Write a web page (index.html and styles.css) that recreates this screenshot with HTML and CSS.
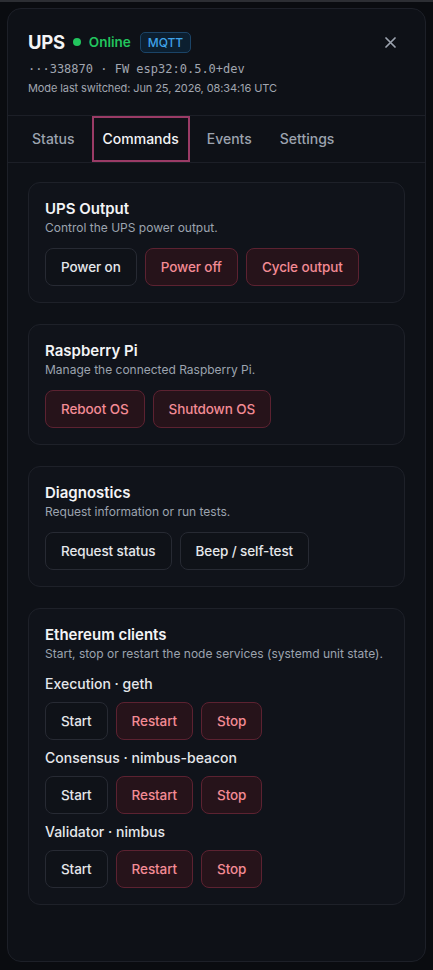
FILE: index.html
```html
<!DOCTYPE html>
<html lang="en">
<head>
  <meta charset="UTF-8" />
  <meta name="viewport" content="width=device-width, initial-scale=1.0"/>
  <title>UPS | Commands</title>
  <link rel="stylesheet" href="styles.css">
</head>
<body>
  <div class="panel">
    <div class="header">
      <div class="title-row">
        <span class="device-name">UPS</span>
        <span class="dot"></span>
        <span class="online">Online</span>
        <span class="badge">MQTT</span>
        <button class="close" aria-label="Close">
          <svg width="11" height="11" viewBox="0 0 11 11"><path d="M1 1L10 10M10 1L1 10" stroke="#9ca3af" stroke-width="1.7" stroke-linecap="round"/></svg>
        </button>
      </div>
      <div class="mono">···338870 · FW esp32:0.5.0+dev</div>
      <div class="meta">Mode last switched: Jun 25, 2026, 08:34:16 UTC</div>
    </div>

    <div class="tabs">
      <div class="tab">Status</div>
      <div class="tab active">Commands</div>
      <div class="tab">Events</div>
      <div class="tab">Settings</div>
    </div>

    <div class="content">
      <div class="card">
        <h3>UPS Output</h3>
        <p>Control the UPS power output.</p>
        <div class="actions">
          <button class="btn">Power on</button>
          <button class="btn danger">Power off</button>
          <button class="btn danger">Cycle output</button>
        </div>
      </div>

      <div class="card">
        <h3>Raspberry Pi</h3>
        <p>Manage the connected Raspberry Pi.</p>
        <div class="actions">
          <button class="btn danger">Reboot OS</button>
          <button class="btn danger">Shutdown OS</button>
        </div>
      </div>

      <div class="card">
        <h3>Diagnostics</h3>
        <p>Request information or run tests.</p>
        <div class="actions">
          <button class="btn">Request status</button>
          <button class="btn">Beep / self-test</button>
        </div>
      </div>

      <div class="card">
        <h3>Ethereum clients</h3>
        <p>Start, stop or restart the node services (systemd unit state).</p>

        <div class="service">
          <div class="service-name">Execution · geth</div>
          <div class="actions">
            <button class="btn">Start</button>
            <button class="btn danger">Restart</button>
            <button class="btn danger">Stop</button>
          </div>
        </div>
        <div class="service">
          <div class="service-name">Consensus · nimbus-beacon</div>
          <div class="actions">
            <button class="btn">Start</button>
            <button class="btn danger">Restart</button>
            <button class="btn danger">Stop</button>
          </div>
        </div>
        <div class="service">
          <div class="service-name">Validator · nimbus</div>
          <div class="actions">
            <button class="btn">Start</button>
            <button class="btn danger">Restart</button>
            <button class="btn danger">Stop</button>
          </div>
        </div>
      </div>
    </div>
  </div>
</body>
</html>
```

FILE: styles.css
```css
* {
  box-sizing: border-box;
  font-family: 'Inter', 'Noto Sans', sans-serif;
}

body {
  margin: 0;
  padding: 6px 7px 8px;
  background: #0a0c10;
  border-top: 2px solid #2c2e33;
  height: 970px;
}

.panel {
  height: 954px;
  background: #0e1117;
  border: 1px solid #1d2028;
  border-radius: 14px;
  color: #e5e7eb;
}

.header {
  padding: 23px 20px 19px;
}

.title-row {
  display: flex;
  align-items: center;
  height: 20px;
}

.device-name {
  font-size: 18.5px;
  font-weight: 700;
  color: #f3f4f6;
  letter-spacing: -0.3px;
}

.dot {
  width: 8px;
  height: 8px;
  border-radius: 50%;
  background: #22c55e;
  margin: 0 8px 0 8px;
}

.online {
  font-size: 13.5px;
  font-weight: 600;
  color: #22c55e;
}

.badge {
  margin-left: 9px;
  padding: 0 7px;
  height: 21px;
  line-height: 19px;
  border: 1px solid #1b4467;
  background: #0c1f30;
  border-radius: 5px;
  font-size: 12px;
  font-weight: 500;
  color: #3fa3ea;
}

.close {
  margin-left: auto;
  margin-right: 9px;
  background: none;
  border: none;
  padding: 0;
  width: 11px;
  height: 11px;
  display: flex;
}

.mono {
  margin-top: 9px;
  font-family: 'DejaVu Sans Mono', monospace;
  font-size: 12px;
  line-height: 16px;
  color: #a1a6b0;
}

.meta {
  margin-top: 3px;
  font-size: 11px;
  line-height: 16px;
  color: #a1a6b0;
  letter-spacing: -0.1px;
}

.tabs {
  display: flex;
  gap: 6px;
  padding: 0 13px;
  border-top: 1px solid #1c1f27;
  border-bottom: 1px solid #1c1f27;
}

.tab {
  padding: 11px 9px;
  line-height: 20px;
  font-size: 14px;
  font-weight: 500;
  color: #9ca3af;
  border: 2px solid transparent;
}

.tab.active {
  color: #f3f4f6;
  border-color: #9a3b66;
}

.content {
  padding: 19px 20px;
  display: flex;
  flex-direction: column;
  gap: 21px;
}

.card {
  border: 1px solid #1e2129;
  border-radius: 12px;
  background: #10131a;
  padding: 16px;
}

.card h3 {
  margin: 0;
  font-size: 15px;
  line-height: 20px;
  font-weight: 600;
  color: #f3f4f6;
}

.card p {
  margin: 0;
  font-size: 12px;
  line-height: 18px;
  color: #9ca3af;
}

.actions {
  display: flex;
  gap: 8px;
  margin-top: 11px;
}

.btn {
  height: 38px;
  padding: 0 15px;
  border-radius: 8px;
  border: 1px solid #272a33;
  background: #0f1218;
  color: #e5e7eb;
  font-size: 13.5px;
  font-weight: 500;
  letter-spacing: -0.1px;
  cursor: pointer;
}

.btn.danger {
  background: #26131a;
  border-color: #5c2231;
  color: #f38b95;
}

.service {
  margin-top: 8px;
}

.service:first-of-type {
  margin-top: 11px;
}

.service-name {
  font-size: 14px;
  line-height: 20px;
  font-weight: 500;
  color: #e5e7eb;
}

.service .actions {
  margin-top: 8px;
}
```
